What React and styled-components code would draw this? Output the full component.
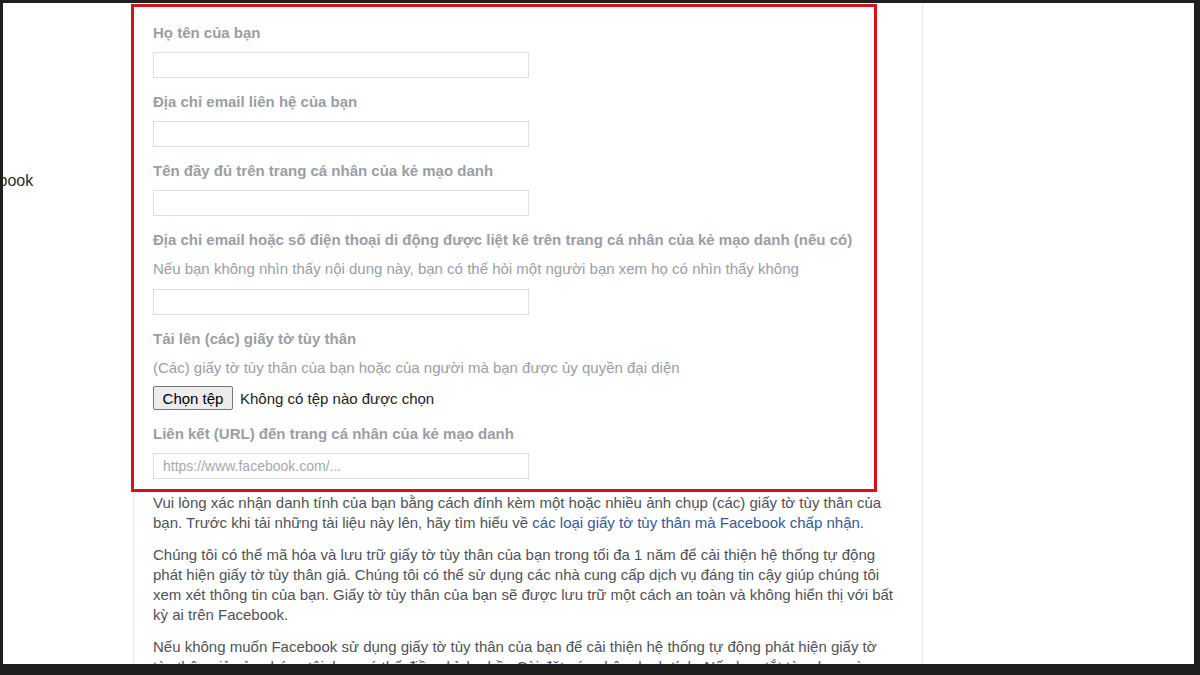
import React from 'react';
import styled, { createGlobalStyle } from 'styled-components';

const Global = createGlobalStyle`
  html, body { margin: 0; padding: 0; background: #1f1f1f; }
  body { font-family: "Liberation Sans", Arial, Helvetica, sans-serif; }
  * { box-sizing: border-box; }
`;

const Frame = styled.div`
  width: 1200px;
  height: 675px;
  padding: 3px 6px 11px 3px;
  background: #1f1f1f;
  overflow: hidden;
`;

const Screen = styled.div`
  height: 100%;
  background: #fff;
  display: flex;
  overflow: hidden;
`;

const Sidebar = styled.aside`
  width: 130px;
  flex: none;
  padding-top: 168px;
  overflow: hidden;
`;

const SideLink = styled.div`
  margin-left: -40px;
  font-size: 16px;
  line-height: 20px;
  color: #2b2d31;
  white-space: nowrap;
`;

const Column = styled.main`
  width: 790px;
  flex: none;
  border-left: 1px solid #e6e7ea;
  border-right: 1px solid #e6e7ea;
  padding-top: 4px;
`;

const FormSection = styled.section`
  width: 740px;
  padding: 17px 20px 10px 19px;
  outline: 3px solid #d6111b;
  display: flex;
  flex-direction: column;
  gap: 15px;
`;

const Field = styled.div`
  display: flex;
  flex-direction: column;
  align-items: flex-start;
`;

const Label = styled.label`
  font-size: 15px;
  font-weight: bold;
  line-height: 18px;
  color: #9a9ea5;
  margin-bottom: 10px;
  white-space: nowrap;
`;

const Help = styled.div`
  font-size: 15px;
  line-height: 20px;
  color: #9a9ea5;
  margin-bottom: ${(p) => (p.$tight ? '8px' : '10px')};
  white-space: nowrap;
`;

const TextInput = styled.input`
  width: 376px;
  height: 26px;
  border: 1px solid #dddfe2;
  padding: 0 9px;
  font-family: inherit;
  font-size: 14px;
  color: #1d2129;
  outline: none;
  &::placeholder { color: #a7a9ad; }
`;

const FileRow = styled.div`
  display: flex;
  align-items: center;
  gap: 7px;
`;

const FileButton = styled.button`
  width: 80px;
  height: 24px;
  padding: 0;
  background: #ececec;
  border: 1px solid #767676;
  border-radius: 2px;
  font-family: inherit;
  font-size: 15px;
  color: #000;
`;

const FileStatus = styled.span`
  font-size: 15px;
  color: #222;
`;

const Body = styled.div`
  padding: 4px 20px 0 19px;
`;

const Para = styled.p`
  max-width: 743px;
  margin: 0 0 12px;
  font-size: 15px;
  line-height: 20px;
  color: #4f5257;
`;

const Link = styled.a`
  color: #365899;
  text-decoration: none;
`;

const RightArea = styled.div`
  flex: 1;
`;

export default function App() {
  return (
    <>
      <Global />
      <Frame>
        <Screen>
          <Sidebar>
            <SideLink>Facebook</SideLink>
          </Sidebar>
          <Column>
            <FormSection>
              <Field>
                <Label>Họ tên của bạn</Label>
                <TextInput type="text" />
              </Field>
              <Field>
                <Label>Địa chỉ email liên hệ của bạn</Label>
                <TextInput type="text" />
              </Field>
              <Field>
                <Label>Tên đầy đủ trên trang cá nhân của kẻ mạo danh</Label>
                <TextInput type="text" />
              </Field>
              <Field>
                <Label>Địa chỉ email hoặc số điện thoại di động được liệt kê trên trang cá nhân của kẻ mạo danh (nếu có)</Label>
                <Help>Nếu bạn không nhìn thấy nội dung này, bạn có thể hỏi một người bạn xem họ có nhìn thấy không</Help>
                <TextInput type="text" />
              </Field>
              <Field>
                <Label>Tải lên (các) giấy tờ tùy thân</Label>
                <Help $tight>(Các) giấy tờ tùy thân của bạn hoặc của người mà bạn được ủy quyền đại diện</Help>
                <FileRow>
                  <FileButton type="button">Chọn tệp</FileButton>
                  <FileStatus>Không có tệp nào được chọn</FileStatus>
                </FileRow>
              </Field>
              <Field>
                <Label>Liên kết (URL) đến trang cá nhân của kẻ mạo danh</Label>
                <TextInput type="text" placeholder="https://www.facebook.com/..." />
              </Field>
            </FormSection>
            <Body>
              <Para>
                Vui lòng xác nhận danh tính của bạn bằng cách đính kèm một hoặc nhiều ảnh chụp (các) giấy tờ tùy thân của bạn. Trước khi tải những tài liệu này lên, hãy tìm hiểu về{' '}
                <Link href="#">các loại giấy tờ tùy thân mà Facebook chấp nhận</Link>.
              </Para>
              <Para>
                Chúng tôi có thể mã hóa và lưu trữ giấy tờ tùy thân của bạn trong tối đa 1 năm để cải thiện hệ thống tự động phát hiện giấy tờ tùy thân giả. Chúng tôi có thể sử dụng các nhà cung cấp dịch vụ đáng tin cậy giúp chúng tôi xem xét thông tin của bạn. Giấy tờ tùy thân của bạn sẽ được lưu trữ một cách an toàn và không hiển thị với bất kỳ ai trên Facebook.
              </Para>
              <Para>
                Nếu không muốn Facebook sử dụng giấy tờ tùy thân của bạn để cải thiện hệ thống tự động phát hiện giấy tờ tùy thân giả của chúng tôi, bạn có thể điều chỉnh phần{' '}
                <Link href="#">Cài đặt xác nhận danh tính</Link>. Nếu bạn tắt tùy chọn này, chúng tôi sẽ xóa giấy tờ tùy thân của bạn trong vòng 30 ngày.
              </Para>
            </Body>
          </Column>
          <RightArea />
        </Screen>
      </Frame>
    </>
  );
}
